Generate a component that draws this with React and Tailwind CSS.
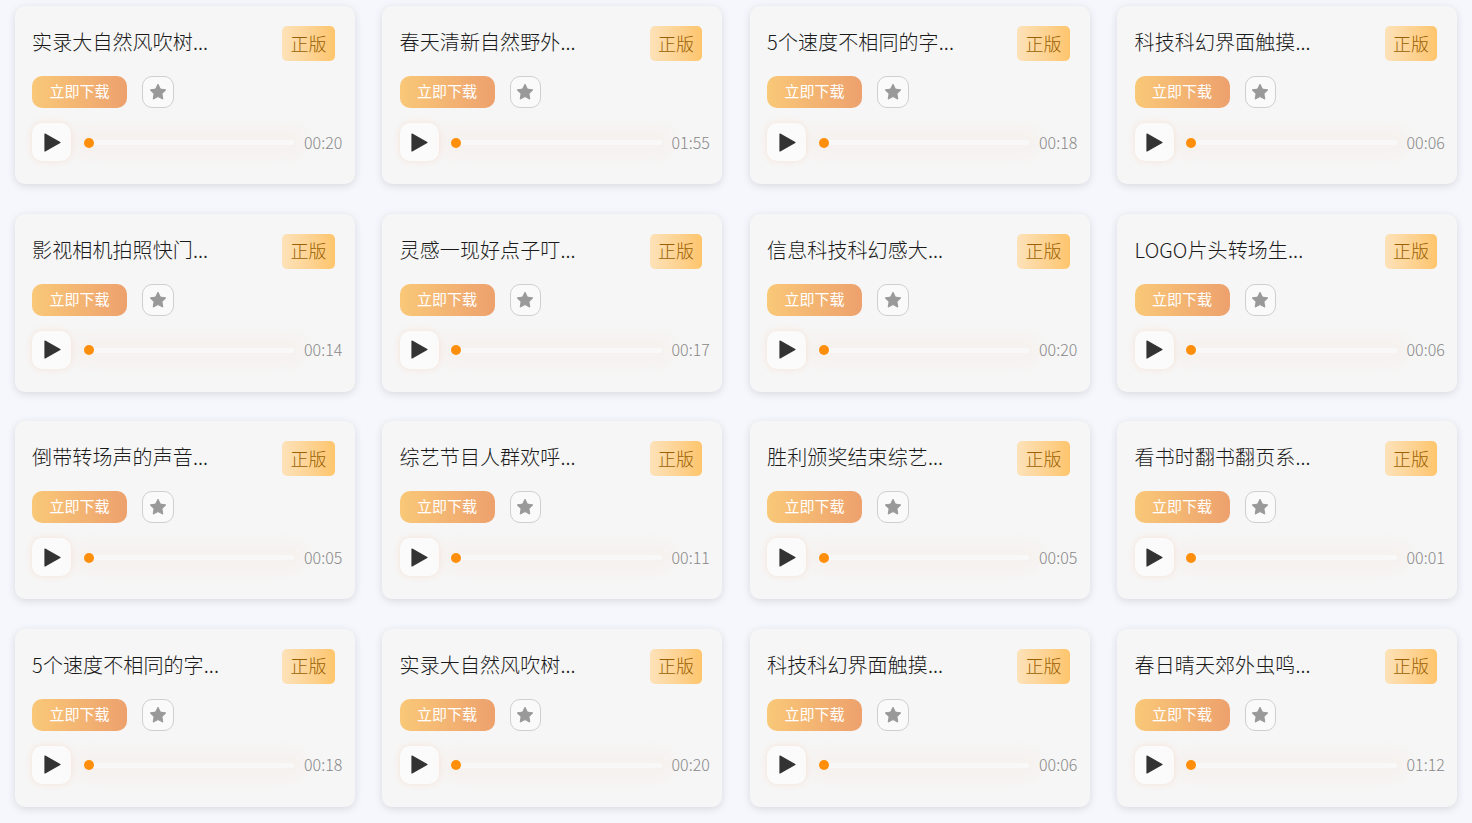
import React from 'react';

const sounds = [
  ['实录大自然风吹树...', '00:20'],
  ['春天清新自然野外...', '01:55'],
  ['5个速度不相同的字...', '00:18'],
  ['科技科幻界面触摸...', '00:06'],
  ['影视相机拍照快门...', '00:14'],
  ['灵感一现好点子叮...', '00:17'],
  ['信息科技科幻感大...', '00:20'],
  ['LOGO片头转场生...', '00:06'],
  ['倒带转场声的声音...', '00:05'],
  ['综艺节目人群欢呼...', '00:11'],
  ['胜利颁奖结束综艺...', '00:05'],
  ['看书时翻书翻页系...', '00:01'],
  ['5个速度不相同的字...', '00:18'],
  ['实录大自然风吹树...', '00:20'],
  ['科技科幻界面触摸...', '00:06'],
  ['春日晴天郊外虫鸣...', '01:12'],
];

function SoundCard({ title, time }) {
  return (
    <div className="h-[178px] w-[340px] rounded-[10px] bg-[#f6f6f6] pl-[17.2px] pr-[20px] pt-[20px] shadow-[0_2px_8px_rgba(0,0,0,0.12)]">
      <div className="flex h-[35px] items-center justify-between">
        <span className="mb-[3px] text-[20px] font-light leading-none tracking-[0.1px] text-[#1a1a1a]">{title}</span>
        <span className="flex h-[35px] w-[52.8px] items-center justify-center rounded-[5px] bg-gradient-to-r from-[#fde2b9] to-[#fec56c] pb-[1px] text-[18px] font-light text-[#9a5f00]">
          正版
        </span>
      </div>
      <div className="mt-[15px] flex items-center gap-[15px]">
        <button className="h-[32px] w-[95px] rounded-[10px] bg-gradient-to-r from-[#f9c878] to-[#eda16d] pb-[1px] text-[15px] text-white">
          立即下载
        </button>
        <button className="flex h-[32px] w-[31.8px] items-center justify-center rounded-[10px] border border-[#cfcfcf] bg-[#fafafa]">
          <svg width="18" height="18" viewBox="0 0 18 18">
            <path
              d="M9 1.2l2.4 4.9 5.4.8-3.9 3.8.9 5.4L9 13.6l-4.8 2.5.9-5.4L1.2 6.9l5.4-.8z"
              fill="#999"
              stroke="#999"
              strokeWidth="1"
              strokeLinejoin="round"
            />
          </svg>
        </button>
      </div>
      <div className="mt-[15px] flex h-[38px] items-center">
        <button className="flex h-[38px] w-[39px] shrink-0 items-center justify-center rounded-[10px] bg-[#fbfbfb] pl-[1px] shadow-[0_0_6px_rgba(255,160,100,0.22)]">
          <svg width="17" height="19" viewBox="0 0 17 19">
            <path d="M1 1L16 9.5 1 18z" fill="#333" stroke="#333" strokeWidth="1.2" strokeLinejoin="round" />
          </svg>
        </button>
        <div className="ml-[12.7px] mt-[1px] flex h-[5px] w-[210.3px] shrink-0 items-center rounded-full bg-[#f9f8f8] shadow-[0_0_16px_10px_rgba(250,210,185,0.13)]">
          <span className="h-[10px] w-[10px] rounded-full bg-[#ff8f0a]" />
        </div>
        <span className="ml-[10px] shrink-0 pb-[1px] text-[16px] font-light leading-none text-[#888]">{time}</span>
      </div>
    </div>
  );
}

export default function App() {
  return (
    <div
      className="min-h-[823px] overflow-hidden bg-[#f6f7fc] pl-[14.9px] pt-[6px] pb-[16px]"
      style={{ fontFamily: '"Noto Sans CJK SC", sans-serif' }}
    >
      <div className="grid grid-cols-[repeat(4,340px)] gap-x-[27.5px] gap-y-[29.5px]">
        {sounds.map(([title, time], i) => (
          <SoundCard key={i} title={title} time={time} />
        ))}
      </div>
    </div>
  );
}
